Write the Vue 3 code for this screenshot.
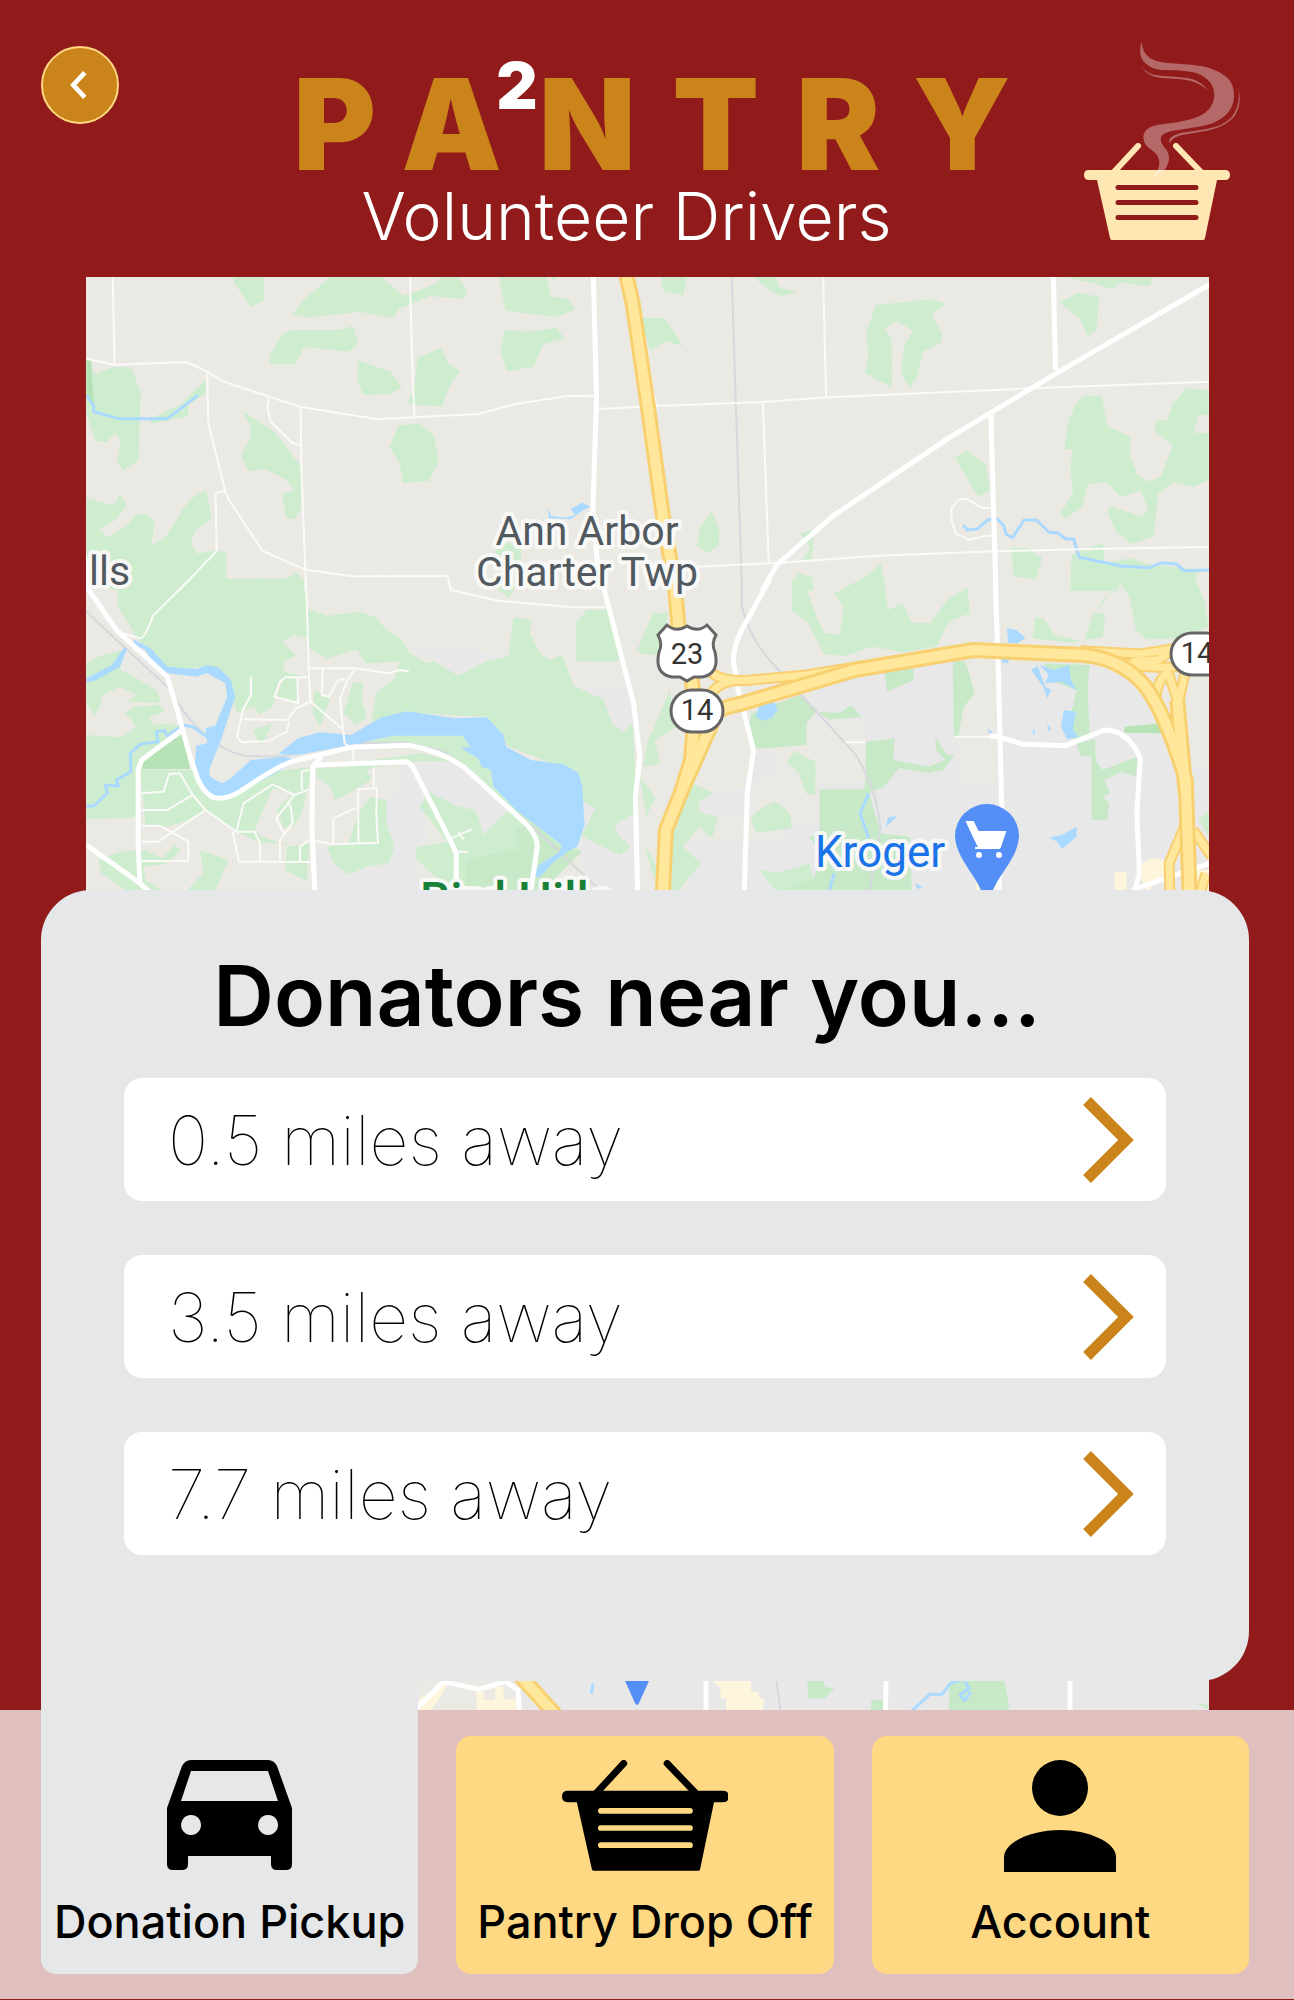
<script setup>
import { ref } from 'vue'

const donators = [
  { id: 1, distance: '0.5 miles away' },
  { id: 2, distance: '3.5 miles away' },
  { id: 3, distance: '7.7 miles away' },
]

const tabs = [
  { id: 'pickup', label: 'Donation Pickup' },
  { id: 'dropoff', label: 'Pantry Drop Off' },
  { id: 'account', label: 'Account' },
]
const activeTab = ref('pickup')

// Drawing order of the map, bottom to top.
const layers = ['urban', 'wood', 'clearing', 'grove', 'park', 'forest', 'shops', 'rail', 'water', 'stream', 'lane', 'road', 'ramp-edge', 'ramp', 'highway-edge', 'highway']

const tiles = [
  {
    id: 'nw',
    transform: 'translate(-6 -7) scale(.3635 .3333)',
    wood: 'M420 20L506 20 506 90 470 112 428 45Z M690 20L828 20 890 78 985 40 988 20 1040 20 1063 60 1058 87 962 78 876 118 864 143 770 126 630 142 586 132 620 85Z M1152 20H1282L1297 80 1342 87 1363 118 1310 141 1170 122Z M1297 20H1310L1304 38Z M584 180H714L752 167 766 222 738 245 616 231 593 283H524L522 258 556 192Z M1168 180L1235 185 1312 173 1332 205 1275 222 1248 290 1175 304 1156 245Z M766 271L855 305 886 352 852 372 780 375 765 340Z M928 265L993 234 1013 280 1047 303 1020 340 996 410 900 402 920 350Z M18 270H30L38 313 95 291H140L167 365 161 570 120 602 101 572 113 518 100 488 74 516 43 514 18 430Z M345 330L347 370 299 402 296 440 195 462V445L275 405Z M446 424L530 480 575 540 608 590V712L592 747 568 745 556 672 589 660 565 628 510 598 463 603 443 555 468 507V465Z M875 467L932 460 973 497 987 573 960 633 888 639 880 583 852 530Z M18 684L93 706 112 672 128 709 95 752 53 776 75 803 130 766 152 735 183 731 206 758 196 827 236 800 300 690 346 660 363 745 316 782 306 822 324 851 375 840 403 847V927L442 943 490 925 532 942 600 908 618 962H105L18 940Z M1144 835L1180 815 1213 840V900H1144Z M1140 950L1200 945 1180 985Z',
    forest: 'M18 270H30L38 400 18 380Z',
    water: 'M1287 715L1297 738 1335 743 1362 735 1350 717 1380 698 1406 710 1385 720 1350 748 1290 745Z',
    stream: 'M18 375L38 408 37 425 108 446H240L325 376',
    lane: 'M90 20L95 280 M18 266L95 284 293 276 350 305 393 334 520 380 607 411 820 448 920 442 1095 432 1195 403 1345 377 1415 379 M908 20L913 250 920 440 M350 305L353 460 400 665 410 690 502 843 620 899 750 919 1012 918 1020 962 M520 380L516 415 525 455 585 520 607 525 M607 411L609 600 620 899V962 M402 665H385Q373 667 373 680L376 843 272 962 M1420 417L1540 411',
    road: 'M1412 10L1421 380 1411 720 1425 900 1441 955 M0 850Q10 830 20 900L22 950',
  },
  {
    id: 'ne',
    transform: 'translate(554 -7) scale(.37 .3333)',
    wood: 'M58 20H127L117 77 62 62Z M305 20H368L376 52 425 68 380 79 340 52Z M636 106L785 87 828 102 788 133 818 195 812 220 766 244 750 318 729 352 706 312 714 225 738 183 694 152 660 175 680 208V350L607 310 618 265 611 190Z M1150 20H1388L1378 49 1297 38 1277 58 1235 43Z M1134 98L1182 68 1242 80 1233 180 1210 200 1188 145Z M0 145H68L117 229 70 214 28 242 5 160Z M1200 377H1248L1263 468 1325 500V560L1345 615 1375 635 1408 620 1440 525 1392 485 1394 452 1425 450 1440 400 1478 355 1537 360V435H1510L1496 488H1537V630L1497 652 1443 637 1400 672 1388 800 1326 822 1284 780 1263 725 1270 708 1358 741 1374 718 1352 660 1300 682 1260 637 1212 643 1194 710 1150 748 1137 730 1170 670 1163 590 1170 538H1147L1158 450 1178 402Z M851 563L884 541 935 585 946 660 914 681Z M194 724L215 780 212 825 184 850 153 828 163 770Z M433 790L468 780V835L462 870 440 868 460 835Z M1002 834H1045L1087 865 1070 928 1010 918Z M1166 855L1252 817 1255 880 1325 865 1385 885 1520 900 1500 920 1510 962H1310L1300 940 1290 962H1163Z M424 908L466 922 468 962H418Z M538 962L600 930 652 882 663 962Z',
    rail: 'M248 20L262 500 275 940',
    stream: 'M873 765L885 780 912 777 940 750 963 745 982 765 990 793 1007 803 1038 750H1072L1105 787 1130 789 1150 807H1172L1187 862 1300 888 1375 893 1410 878 1450 882 1470 902 1540 900',
    lane: 'M35 370L45 408 330 396 510 382 1080 354 1540 335 M495 20L503 380 M332 396L348 880 M120 892L370 879 640 857 960 844 1250 836 1540 831 M950 714H925L885 688H862L842 714V750L853 790 890 810 935 797H952',
    road: 'M1560 30L1125 310 945 430 840 500 525 735 370 885 330 962 M1117 10L1123 300 M948 430L962 962',
    'highway-edge': 'M-38 10L-20 100 20 400 62 740 93 940',
    highway: 'M-38 10L-20 100 20 400 62 740 93 940',
  },
  {
    id: 'sw',
    transform: 'translate(-6 303) scale(.3635 .3333)',
    urban: 'M880 560L1030 545 1130 640 1200 720 1110 770 1090 690 1035 680 935 620 960 780 920 830 940 935H650V820L680 800 740 882 850 850 865 800 845 730V650L880 640Z M905 205L1060 205 1180 228 1115 245 1040 287 975 243Z M1360 320L1520 335 1525 430 1495 455 1465 435 1440 358Z M1380 660H1535V935H1400L1370 800Z',
    wood: 'M105 -4L618 -4 623 85 683 107 768 95 815 112 843 150 885 178 905 217 955 250 975 243 1040 287 1115 245 1180 228 1192 112 1242 120 1238 160 1262 215 1290 240 1327 225 1358 318 1440 358 1465 435 1495 455 1520 430 1530 620 1525 700 1470 735 1480 765 1515 800 1485 825 1380 768 1418 685 1385 665 1370 580 1180 500 1120 410 930 400 800 425 740 465 660 455 560 520 480 380 430 400 410 290 350 260 240 270 160 180 105 80Z M1395 90L1450 88 1485 245 1365 243V125Z M1530 210L1568 150V225Z M18 250L60 225 125 210 110 270 150 290 215 335 220 368 130 365 155 345 110 320 60 345 55 380 40 405 18 370Z M150 380L220 375 235 395 190 410 200 435 240 430 285 440 200 520 165 550 160 700 145 713 18 718V465L115 472 155 440 125 400Z M165 570H315L380 655 430 640 530 575 640 560 610 700 585 740 560 745 540 690 585 640 530 625 480 750 500 770 580 800 630 790 625 905 565 870 570 790 500 790 430 755 345 690 300 720 240 740 180 735Z M50 840L110 815 180 810 225 835 260 795 278 810 240 850 175 860 180 900 230 935H130L60 880Z M330 810L408 840 370 935H290L340 880Z M650 565L740 560 765 545 940 520 1030 545 870 545 790 570 800 600 740 640 700 660 690 620 650 590Z M800 650L843 660V730L865 800 850 850 790 860 740 882 700 855 680 800 740 790 765 700Z M960 635L1040 680 1088 690 1110 765 1180 690 1290 790 1380 810 1260 935H1030L970 885 920 830 930 800 1010 785 935 680Z M860 467L1052 467 1130 570 1138 620 1330 790 1340 820 1240 740 1060 560 930 495 780 490Z',
    clearing: 'M555 185L587 165 623 175 630 205 680 235 762 208 785 250 880 245 865 295 815 340 800 430 745 470 560 520 460 490 430 470 470 420 530 380 550 300 625 290 560 275 560 245 595 225Z M290 290L340 292 345 375 405 410 380 450 300 440 265 380 245 290Z',
    grove: 'M645 330L690 350 660 440 640 400Z M750 310L780 305 775 360 790 410 760 435 725 400Z M540 400L500 500 475 450 530 430Z M560 295H600V365L540 350Z',
    park: 'M1060 840L1160 815 1200 810V750L1250 730 1330 810 1380 815 1270 935H1060Z',
    forest: 'M285 460L302 567H172L165 545Z',
    water: 'M18 295L88 255 120 205 130 205 110 260 40 303 18 307Z M150 180L195 205 240 260 320 267 350 256 380 262 415 300 427 350 388 480 355 570 358 590 390 610 415 595 470 540 560 530 600 540 440 640 380 655 340 640 315 570 320 497 350 490 345 445 372 437 405 350 400 310 350 280 320 290 240 280 200 245 180 210 140 190Z M545 523L600 475 660 457 745 465 830 412 900 394 1030 415 1120 412 1165 465 1172 500 1240 540 1330 553 1372 580 1382 620 1388 735 1368 800 1340 815 1300 850 1265 890H1250L1262 855 1320 815 1325 795 1200 690 1138 620 1130 570 1105 560 1095 535 1048 505 1075 500 1052 467 860 467 770 490 600 525Z',
    stream: 'M18 678H38L75 640 70 615 105 618 100 600 140 575 138 520 165 493 215 485 210 455 232 452 240 468 285 435 310 440 375 490',
    rail: 'M18 95L110 190 250 330Q280 400 340 460T460 528L550 530 740 490 900 488 1000 515 1060 565 1250 745 1430 930',
    lane: 'M300 0L200 108Q180 175 165 175L115 160 M622 0L630 290 634 365 720 445 M1015 0L1020 30 1150 62 1350 82H1445 M630 265H755L850 280 880 270 905 275 M755 270L735 300 715 360 728 490 740 500 M728 298L710 300 685 350 665 345 668 265 M625 292H565L550 305 535 350 600 370 598 292 M634 365L595 385 570 420 450 418 M470 290V345L448 390 432 470 445 487 520 483 570 455 575 425 M170 640L230 635 245 582 275 580 310 645 345 690 430 755 450 670 530 613 590 645 630 628 M170 690H240L310 645 M345 690L215 785H170 M170 737H220L298 785V843H170 M430 755L480 755 495 790V843 M420 755L437 845 635 846 M550 843V780L585 730 580 680 570 668 M560 760L540 715 590 645 M605 843V800L630 780 700 793 820 788 815 700 817 625 765 628 766 790 M697 793V715L760 683 M808 622V560 M630 570L610 575V630 M752 505V545 M1020 775L1078 748 M1040 755L1055 778 M1035 815H1068',
    road: 'M18 20L100 150 240 290 270 400 300 520 325 600Q350 655 380 655T440 635Q560 545 600 540L745 502 905 496Q1000 515 1060 565L1230 735Q1258 770 1258 800L1240 935 M280 450L170 540 160 570V800L165 910 M18 795L165 910 190 935 M640 555L900 545 915 560 1025 795 1035 820V935 M665 530L640 560 638 740 646 935 M1440 20L1523 370 1540 530 1528 650 1534 935',
  },
  {
    id: 'se',
    transform: 'translate(554 303) scale(.37 .3333)',
    urban: 'M480 280L850 240 860 620H965V250L1220 250 1380 330 1460 560 1540 560V935H130V790L220 785 380 780 385 740 480 740V620L610 600 610 430 520 420 450 430Z M160 640L285 622V700H160Z M310 510L365 510 370 580 300 620Z',
    wood: 'M410 -4L440 -4 480 120 500 160 540 165 550 80 525 40 600 -4H660L670 90 710 70 735 130H785L830 60 885 22 892 100 835 125 800 200 710 217 630 200 550 228 497 222 455 130 410 90Z M1163 -4H1300L1255 65 1225 100 1258 100 1250 170 1170 188 1060 175 1068 112 1090 115 1122 165 1165 60Z M1304 8L1325 60 1340 150 1370 178 1450 175 1537 140 1525 60 1500 -4H1310Z M1225 100L1260 50 1304 8 1290 -4H1163L1165 60 1122 165 1200 186Z M0 190L35 98H75L60 225 0 222Z M80 332L100 440 40 480 55 550 8 562 20 490Z M0 590L42 655 20 700 20 730Z M140 610L200 640 160 665 158 695 210 712 195 775 160 740 115 800 165 850 100 935H70L90 760 110 700Z M10 790L45 860 40 900Z M415 513L475 545 473 648 448 640 430 580 398 548Z M365 663L405 700 410 745 315 758 298 715 325 688Z M320 868L370 880 458 850 480 935H370Z M1510 718L1537 695V770Z',
    park: 'M300 400L430 345 480 390 450 430V495L310 507 290 460Z M480 395L540 398 570 375 600 412 510 418Z M660 275L740 262V300L668 335Z M845 240L880 245 905 340 875 380 860 470H848Z M1090 250L1215 255 1210 320 1215 460 1190 480 1150 470 1180 330 1130 310Z M610 485L688 475 685 540 780 560 825 540 800 510 798 472 830 525H850L820 570 780 580 700 565 660 620 620 640 650 760 730 770 735 935H370L470 900 485 820 458 770 485 768V628H605L610 600Z M1180 490L1230 478 1232 540 1250 570 1345 530 1340 590 1300 575 1255 600 1270 640 1250 650 1268 670 1263 720H1220V530L1190 528Z',
    forest: 'M1310 440L1410 430 1412 460 1308 458Z',
    shops: 'M1283 877H1315V935H1283Z M1340 860L1380 835 1420 840 1430 870 1370 935Z M908 895H970V935H908Z M1490 870H1540V935H1490Z',
    water: 'M992 145L1018 150 1042 175 1020 190 995 188Z M975 235L998 232 995 250 978 247Z M312 410L325 370 365 368 372 390 355 415 330 422Z M1057 270L1075 258 1095 320 1112 330 1100 355 1090 320Z M1080 255L1120 270 1160 255 1165 300 1180 330 1140 305 1095 310 1105 285Z M1145 390L1178 395 1170 450 1185 470 1155 478 1138 440Z M665 740L670 712 695 708 680 725Z M1105 773L1140 765 1180 740V770L1140 808 1128 785Z M940 445L955 460 942 458Z M745 910L765 922 748 928Z M1062 445L1068 455 1062 468Z M1100 430L1110 445 1104 455Z',
    rail: 'M275 0V80Q300 180 350 240L580 520Q640 620 650 750L620 935',
    stream: 'M618 640L595 700 618 775 M525 880L512 930',
    lane: 'M850 470H950 M555 487H610',
    road: 'M350 0L290 120Q255 180 252 240L265 330 307 510 290 640 282 935 M960 0L968 250 978 700 970 935 M945 468L970 470 1030 492 1150 497 1255 450Q1320 450 1352 535L1343 700 1350 880 1340 920 M1330 930L1540 850',
    'ramp-edge': 'M175 260Q210 310 300 300L450 285 700 240 M180 370Q200 300 270 302 M1190 212L1350 222 1480 200 M1210 220Q1350 280 1500 255 M1330 245L1400 240 1440 210 M1395 370Q1390 310 1430 270 M1425 270L1455 370 1475 270 M1475 730L1430 850 1432 935 M1495 750L1545 830 M1530 880L1515 935',
    ramp: 'M175 260Q210 310 300 300L450 285 700 240 M180 370Q200 300 270 302 M1190 212L1350 222 1480 200 M1210 220Q1350 280 1500 255 M1330 245L1400 240 1440 210 M1395 370Q1390 310 1430 270 M1425 270L1455 370 1475 270 M1475 730L1430 850 1432 935 M1495 750L1545 830 M1530 880L1515 935',
    'highway-edge': 'M92 -10L104 140 140 300 150 400 M145 440L138 540 110 640 70 750 62 935 M195 430L138 570 110 640 M180 415Q220 380 270 372L580 270 900 210 1200 225Q1290 235 1350 300T1475 600L1485 935 M1452 360L1475 640',
    highway: 'M92 -10L104 140 140 300 150 400 M145 440L138 540 110 640 70 750 62 935 M195 430L138 570 110 640 M180 415Q220 380 270 372L580 270 900 210 1200 225Q1290 235 1350 300T1475 600L1485 935 M1452 360L1475 640',
  },
  {
    id: 'south-west',
    transform: 'translate(-86 1323) scale(.4127 .3333)',
    urban: 'M1260 230H1600V340H1260Z',
    shops: 'M1070 250L1090 245 1040 340H1014V300Z M1155 275H1172V300H1200V260H1220V298H1250V340H1155Z',
    stream: 'M1437 250L1433 282',
    road: 'M1010 325L1075 245 1160 268 1225 245 1255 270 1258 340',
    'highway-edge': 'M1255 220L1350 350',
    highway: 'M1255 220L1350 350',
  },
  {
    id: 'south-east',
    transform: 'translate(561 1323) scale(.4127 .3333)',
    urban: 'M-20 230H1370V340H-20Z',
    shops: 'M150 235H252V275H270V290L285 300 278 340H192V295H178V265Z',
    park: 'M388 235H425L432 262 455 263 432 295H390Z M543 300H572V340H543Z M732 235H865L878 320 870 340H732Z M1328 310L1360 315V328Z',
    rail: 'M313 235L324 340',
    stream: 'M640 335L685 283H715L735 250 760 240 M770 245L780 265 758 285 770 302 785 275',
    road: 'M143 235V340 M579 235L578 340 M1025 235V340',
  },
]
</script>

<template>
  <div class="app">
    <header class="top">
      <button class="back" type="button" aria-label="Back">
        <svg viewBox="0 0 78 78" aria-hidden="true">
          <path d="M44 26L32 39L44 52" />
        </svg>
      </button>
      <div class="brand">
        <h1 class="brand-name">PANTRY<sup>2</sup></h1>
        <p class="brand-sub">Volunteer Drivers</p>
      </div>
      <svg class="logo" viewBox="0 0 156 198" aria-hidden="true">
        <svg y="101" width="146" height="97" viewBox="0 0 146 97">
          <use href="#basket" />
        </svg>
        <g class="steam" transform="matrix(.4127 0 0 .3333 -438 -42)">
          <path d="M1201 126Q1203 160 1222 175Q1240 188 1265 189L1320 194Q1380 200 1410 235Q1425 255 1425 288Q1425 320 1405 345Q1380 373 1340 380Q1310 385 1290 390Q1250 395 1247 415Q1247 430 1258 445Q1268 458 1267 480Q1264 500 1256 510L1240 510Q1244 498 1244 485Q1243 465 1225 450Q1205 435 1205 410Q1208 378 1250 373Q1290 368 1320 358Q1376 338 1377 285Q1376 240 1335 220Q1315 211 1250 210Q1225 208 1210 190Q1190 165 1201 126Z" />
          <path d="M1198 194Q1212 225 1250 228Q1300 230 1325 238Q1350 248 1363 275Q1348 252 1320 243Q1300 236 1250 234Q1212 230 1198 194Z" />
          <path d="M1434 262Q1447 310 1425 350Q1405 380 1360 392Q1320 400 1298 405Q1275 412 1269 430Q1262 410 1295 399L1355 388Q1400 378 1420 350Q1443 310 1434 262Z" />
          <path class="wisp" d="M1256 510Q1245 526 1222 534Q1234 524 1240 510Z" />
        </g>
      </svg>
    </header>

    <main class="stage">
      <div class="map" role="img" aria-label="Map of the Ann Arbor area">
        <svg viewBox="0 0 1123 1433" preserveAspectRatio="xMidYMin slice">
          <g v-for="layer in layers" :key="layer">
            <template v-for="tile in tiles" :key="tile.id">
              <path v-if="tile[layer]" :class="layer" :d="tile[layer]" :transform="tile.transform" />
            </template>
          </g>

          <g class="place">
            <text x="501" y="268" text-anchor="middle">Ann Arbor</text>
            <text x="501" y="309" text-anchor="middle">Charter Twp</text>
            <text x="3" y="308">lls</text>
            <text class="nature" x="334" y="639">Bird Hills</text>
            <text class="shop" x="729" y="590">Kroger</text>
          </g>

          <g class="shield">
            <path d="M581 348Q590 356 601 349Q612 356 621 348L630 358Q625 367 629 375Q634 397 616 400L608 400L601 404L594 400L586 400Q568 397 573 375Q577 367 572 358Z" />
            <text x="601" y="387">23</text>
            <rect x="585" y="413" width="52" height="42" rx="21" />
            <text x="611" y="443">14</text>
            <rect x="1085" y="356" width="56" height="42" rx="21" />
            <text x="1111" y="386">14</text>
          </g>

          <g class="pin">
            <path d="M897 620C893 600 870 583 869 559A32 32 0 1 1 933 559C932 583 909 600 905 620Z" />
            <path class="cart" d="M881 545H887L892 555H919L914 570H893L889 562ZM889 571H914" />
            <circle cx="893" cy="578" r="3" />
            <circle cx="913" cy="578" r="3" />
            <path d="M535 1395L549 1426Q551 1430 553 1426L567 1395Z" />
          </g>
        </svg>
      </div>

      <section class="panel" aria-labelledby="near-title">
        <h2 id="near-title">Donators near you...</h2>
        <ul class="list">
          <li v-for="donator in donators" :key="donator.id">
            <button class="row" type="button">
              <span>{{ donator.distance }}</span>
              <svg viewBox="0 0 52 86" aria-hidden="true">
                <path d="M4 4L43 43L4 82" />
              </svg>
            </button>
          </li>
        </ul>
      </section>
    </main>

    <nav class="tabs" aria-label="Main">
      <a
        v-for="tab in tabs"
        :key="tab.id"
        href="#"
        class="tab"
        :class="{ active: tab.id === activeTab }"
        :aria-current="tab.id === activeTab ? 'page' : undefined"
        @click.prevent="activeTab = tab.id"
      >
        <svg v-if="tab.id === 'pickup'" viewBox="0 0 125 112" aria-hidden="true">
          <path
            fill-rule="evenodd"
            d="M0 48L15 6Q18 0 24 0H101Q107 0 110 6L125 48V104Q125 110 119 110H110Q104 110 104 104V96H21V104Q21 110 15 110H6Q0 110 0 104ZM24 11L14 41H111L101 11ZM24 55a10 10 0 1 0 .1 0ZM101 55a10 10 0 1 0 .1 0Z"
          />
        </svg>
        <svg v-else-if="tab.id === 'dropoff'" viewBox="0 0 146 98" aria-hidden="true">
          <use href="#basket" />
        </svg>
        <svg v-else viewBox="0 0 112 112" aria-hidden="true">
          <circle cx="56" cy="28" r="28" />
          <path d="M0 112V97C0 82 28 70 56 70S112 82 112 97V112Z" />
        </svg>
        <span>{{ tab.label }}</span>
      </a>
    </nav>

    <svg class="defs" width="0" height="0" aria-hidden="true">
      <defs>
        <g id="basket">
          <path
            fill-rule="evenodd"
            d="M5 27H141Q146 27 146 32T141 37H133L121 95Q121 97 119 97H28Q26 97 26 95L13 37H5Q0 37 0 32T5 27ZM34 42a2.5 2.5 0 0 0 0 5H112a2.5 2.5 0 0 0 0-5ZM34 57a2.5 2.5 0 0 0 0 5H112a2.5 2.5 0 0 0 0-5ZM34 72a2.5 2.5 0 0 0 0 5H112a2.5 2.5 0 0 0 0-5Z"
          />
          <path d="M54 3L30 29M92 3L117 29" fill="none" stroke="currentColor" stroke-width="6" stroke-linecap="round" />
        </g>
      </defs>
    </svg>
  </div>
</template>

<style>
body {
  margin: 0;
  background: #911b1b;
}
</style>

<style scoped>
.app {
  background: #911b1b;
  font-family: Inter, "Open Sans", sans-serif;
  color: #000;
  padding-bottom: 1px;
}

.defs {
  position: absolute;
}

.top {
  display: grid;
  grid-template-columns: 1fr auto 1fr;
  align-items: start;
  min-height: 277px;
  padding: 0 54px 0 41px;
  box-sizing: border-box;
}

.back {
  width: 78px;
  height: 78px;
  margin-top: 46px;
  padding: 0;
  border: 2px solid #fed883;
  border-radius: 50%;
  background: #cb8419;
}

.back svg {
  display: block;
  width: 100%;
}

.back path {
  fill: none;
  stroke: #fff;
  stroke-width: 5;
}

.brand {
  color: #fff;
  text-align: center;
}

.brand-name {
  position: relative;
  margin: 0;
  padding: 60px 0 0 60px;
  color: #cb8419;
  font-size: 126px;
  font-weight: 900;
  line-height: 128px;
  letter-spacing: 37px;
}

.brand-name sup {
  position: absolute;
  top: 54px;
  left: 263px;
  color: #fff;
  font-size: 64px;
  line-height: 64px;
  letter-spacing: 0;
}

.brand-sub {
  margin: 0;
  padding-right: 28px;
  font-size: 66px;
  font-weight: 300;
  line-height: 56px;
}

.logo {
  justify-self: end;
  width: 156px;
  height: 198px;
  margin-top: 42px;
  color: #ffe7b4;
  fill: currentColor;
}

.steam {
  fill: #b46868;
}

.wisp {
  fill: #ffeed0;
}

.stage {
  position: relative;
  display: grid;
  padding: 613px 45px 29px 41px;
}

.map {
  position: absolute;
  inset: 0 85px 0 86px;
  overflow: hidden;
  background: #ebe9e4;
}

.map svg {
  display: block;
  width: 100%;
  height: 100%;
}

.map path {
  vector-effect: non-scaling-stroke;
}

.urban { fill: #e8e8e8; }
.wood, .grove { fill: #ceedce; }
.clearing { fill: #ebe9e4; }
.park { fill: #c8e9c8; }
.forest { fill: #b5e3b5; }
.shops { fill: #fdf5dc; }
.water { fill: #aadaff; }

.rail, .stream, .lane, .road, .ramp, .ramp-edge, .highway, .highway-edge {
  fill: none;
  stroke-linejoin: round;
}

.rail { stroke: #d5d8dc; stroke-width: 2; }
.stream { stroke: #aadaff; stroke-width: 3; }
.lane { stroke: #fbfaf8; stroke-width: 2; }
.road { stroke: #fff; stroke-width: 5; }
.ramp-edge { stroke: #f8d070; stroke-width: 11; }
.ramp { stroke: #ffe89c; stroke-width: 7; }
.highway-edge { stroke: #f8d070; stroke-width: 16; }
.highway { stroke: #ffe89c; stroke-width: 10; }

.place {
  fill: #525960;
  stroke: #f8f8f6;
  stroke-width: 8;
  stroke-linejoin: round;
  paint-order: stroke;
  font-family: Roboto, sans-serif;
  font-size: 41px;
}

.place .nature {
  fill: #188038;
  font-size: 48px;
  font-weight: 500;
}

.place .shop {
  fill: #1a73e8;
  font-size: 44px;
}

.shield {
  fill: #fff;
  stroke: #666;
  stroke-width: 3;
  font-family: Roboto, sans-serif;
  font-size: 29px;
}

.shield text {
  fill: #333;
  stroke: none;
  text-anchor: middle;
}

.pin {
  fill: #548ff7;
}

.pin circle {
  fill: #fff;
}

.pin .cart {
  fill: #fff;
  stroke: #fff;
  stroke-width: 2;
}

.panel {
  position: relative;
  padding: 54px 83px 126px;
  border-radius: 50px 50px 50px 0;
  background: #e5e7e9;
}

.panel h2 {
  margin: 0;
  padding-right: 36px;
  font-size: 84px;
  font-weight: 600;
  line-height: 104px;
  text-align: center;
}

.list {
  display: grid;
  gap: 54px;
  margin: 30px 0 0;
  padding: 0;
  list-style: none;
}

.row {
  display: flex;
  align-items: center;
  justify-content: space-between;
  width: 100%;
  height: 123px;
  padding: 0 31px 0 44px;
  border: 0;
  border-radius: 18px;
  background: #fff;
  color: #000;
  font: 100 68px/80px Inter, "Open Sans", sans-serif;
}

.row svg {
  width: 52px;
  height: 86px;
}

.row path {
  fill: none;
  stroke: #cb8419;
  stroke-width: 11;
}

.tabs {
  display: grid;
  grid-template-columns: repeat(3, 1fr);
  gap: 38px;
  padding: 26px 45px 25px 41px;
  background: #dfc0bf;
}

.tab {
  position: relative;
  display: flex;
  flex-direction: column;
  align-items: center;
  padding: 24px 0 26px;
  border-radius: 15px;
  background: #fed883;
  color: #000;
  font-size: 45px;
  font-weight: 500;
  line-height: 52px;
  text-decoration: none;
  white-space: nowrap;
}

.tab.active {
  margin-top: -80px;
  padding-top: 104px;
  border-radius: 0 0 15px 15px;
  background: #e5e7e9;
}

.tab svg {
  height: 112px;
  margin-bottom: 24px;
  fill: currentColor;
}
</style>
